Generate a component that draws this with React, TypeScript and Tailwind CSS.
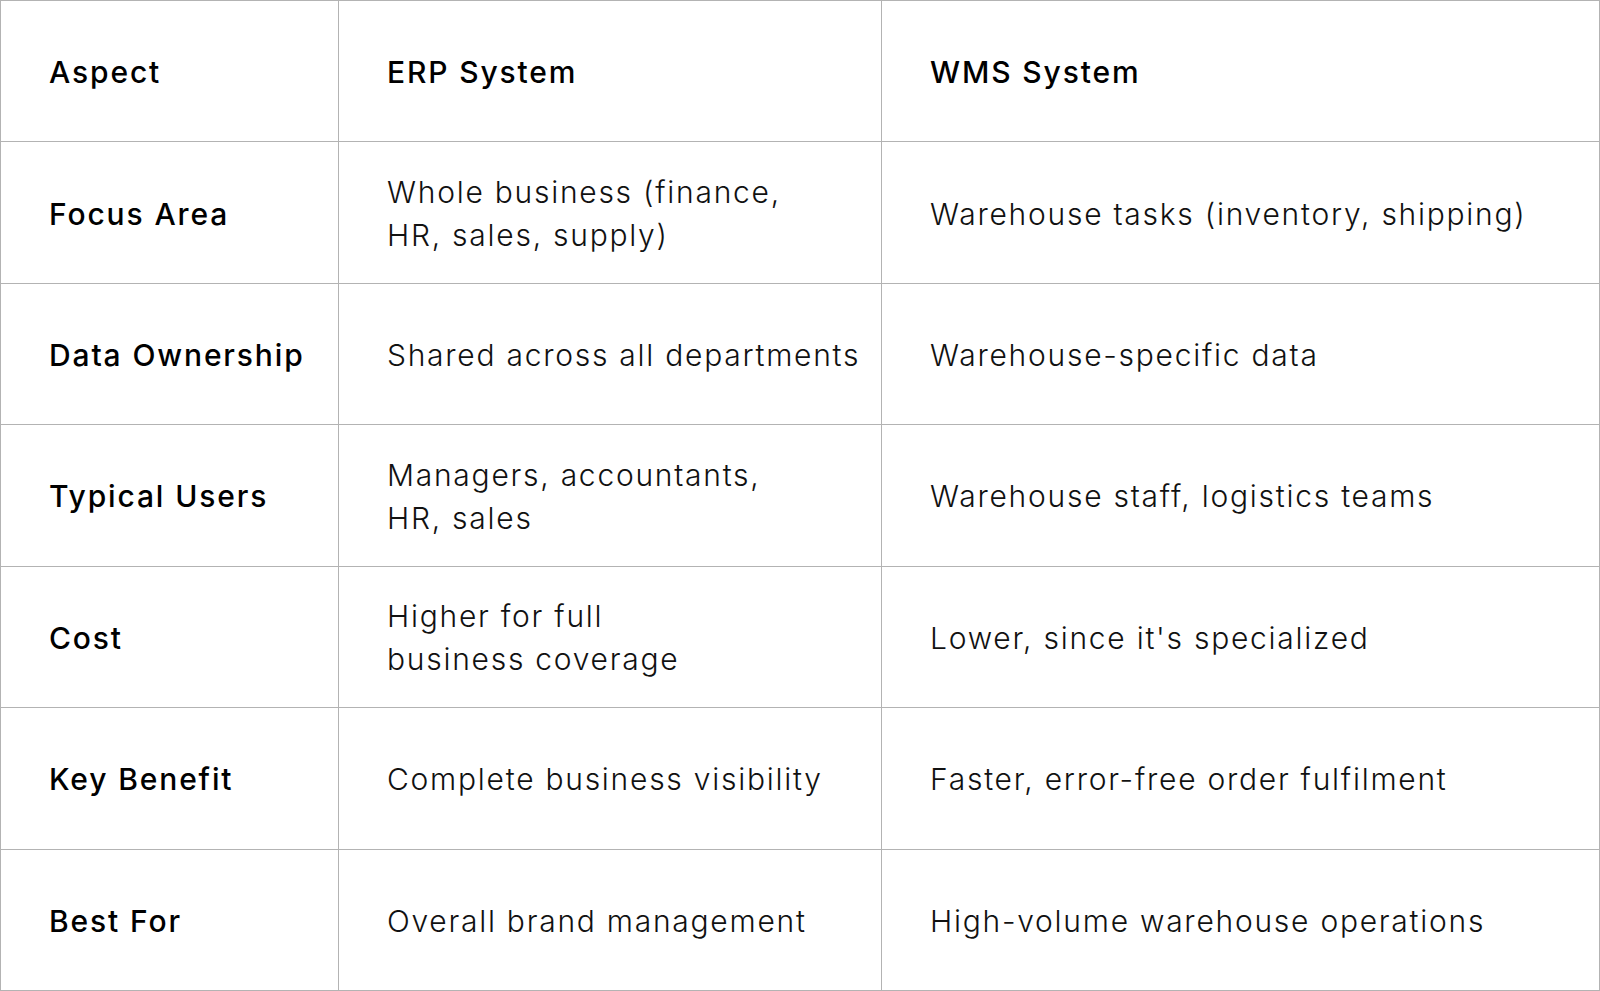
import React from "react";

const rows: { label: string; erp: string[]; wms: string[] }[] = [
    { label: "Focus Area", erp: ["Whole business (finance,", "HR, sales, supply)"], wms: ["Warehouse tasks (inventory, shipping)"] },
    { label: "Data Ownership", erp: ["Shared across all departments"], wms: ["Warehouse-specific data"] },
    { label: "Typical Users", erp: ["Managers, accountants,", "HR, sales"], wms: ["Warehouse staff, logistics teams"] },
    { label: "Cost", erp: ["Higher for full", "business coverage"], wms: ["Lower, since it's specialized"] },
    { label: "Key Benefit", erp: ["Complete business visibility"], wms: ["Faster, error-free order fulfilment"] },
    { label: "Best For", erp: ["Overall brand management"], wms: ["High-volume warehouse operations"] },
];

const cell = "flex items-center pl-[48px] pt-[3px] border-r border-b border-[#b3b3b3] whitespace-nowrap";
const head = "text-[30px] font-medium text-black tracking-[0.062em] leading-[43px]";
const body = "text-[30px] font-light text-[#111] leading-[43px] tracking-[0.058em]";

export default function App() {
    return (
        <div
            className="w-[1600px] h-[991px] grid grid-cols-[338px_543px_1fr] grid-rows-7 border-l border-t border-[#b3b3b3] bg-white"
            style={{ fontFamily: "Inter, 'Noto Sans', sans-serif" }}
        >
            {/* header */}
            <div className={cell}><span className={head}>Aspect</span></div>
            <div className={cell}><span className={head}>ERP System</span></div>
            <div className={cell}><span className={head}>WMS System</span></div>

            {rows.map((r) => (
                <React.Fragment key={r.label}>
                    <div className={cell}><span className={head}>{r.label}</span></div>
                    <div className={cell}>
                        <p className={body}>
                            {r.erp.map((l, i) => (
                                <span key={i} className="block">{l}</span>
                            ))}
                        </p>
                    </div>
                    <div className={cell}>
                        <p className={body}>
                            {r.wms.map((l, i) => (
                                <span key={i} className="block">{l}</span>
                            ))}
                        </p>
                    </div>
                </React.Fragment>
            ))}
        </div>
    );
}
